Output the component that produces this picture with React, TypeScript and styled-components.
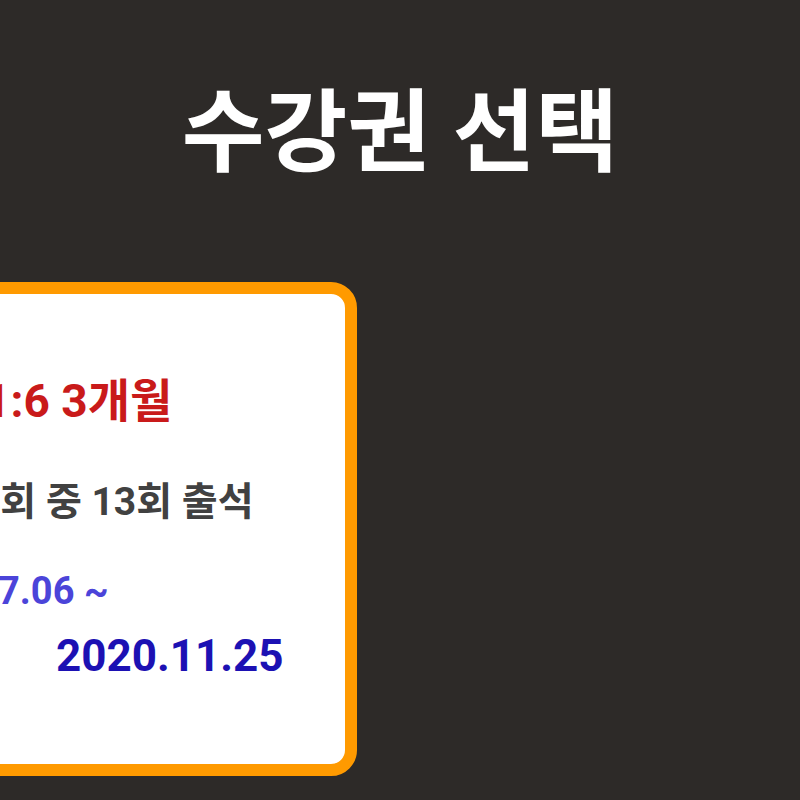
import React from "react";
import styled, { createGlobalStyle } from "styled-components";

const GlobalStyle = createGlobalStyle`
  html, body {
    margin: 0;
    padding: 0;
    background: #2d2a28;
    overflow: hidden;
  }
  body {
    font-family: Roboto, "Noto Sans CJK KR", sans-serif;
  }
`;

const Page = styled.div`
  width: 800px;
  height: 800px;
  display: flex;
  flex-direction: column;
  background: #2d2a28;
`;

const Title = styled.h1`
  margin: 0;
  padding-top: 84px;
  height: 100px;
  line-height: 100px;
  text-align: center;
  color: #ffffff;
  font-size: 90px;
  font-weight: 700;
`;

const Card = styled.div`
  box-sizing: border-box;
  margin-top: 98px;
  margin-left: -174px;
  width: 531px;
  height: 494px;
  border: 12px solid #ff9a00;
  border-radius: 26px;
  background: #ffffff;
  padding: 80px 0 0 40px;
  display: flex;
  flex-direction: column;
  white-space: nowrap;
`;

const Line = styled.div<{
  $size: number;
  $lh: number;
  $color: string;
  $gap?: number;
  $indent?: number;
}>`
  margin-top: ${(p) => p.$gap ?? 0}px;
  margin-left: ${(p) => p.$indent ?? 0}px;
  font-size: ${(p) => p.$size}px;
  line-height: ${(p) => p.$lh}px;
  color: ${(p) => p.$color};
  font-weight: 700;
`;

export default function App() {
  return (
    <>
      <GlobalStyle />
      <Page>
        <Title>수강권 선택</Title>
        <Card>
          <Line $size={46} $lh={54} $color="#c91a1a" $indent={10}>
            그룹 1:6 3개월
          </Line>
          <Line $size={39} $lh={50} $color="#414141" $gap={49} $indent={32}>
            총 24회 중 13회 출석
          </Line>
          <Line $size={38} $lh={46} $color="#4b44d9" $gap={41} $indent={0}>
            2020.07.06 ~
          </Line>
          <Line $size={44} $lh={50} $color="#1c11b3" $gap={17} $indent={178}>
            2020.11.25
          </Line>
        </Card>
      </Page>
    </>
  );
}
